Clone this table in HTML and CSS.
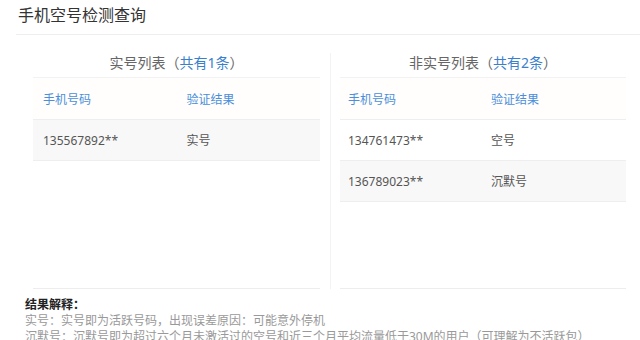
FILE: index.html
```html
<!DOCTYPE html>
<html lang="zh-CN">
<head>
<meta charset="utf-8">
<title>手机空号检测查询</title>
<link rel="stylesheet" href="styles.css">
</head>
<body>
<div class="page">
  <h1 class="title">手机空号检测查询</h1>
  <div class="panels">
    <div class="col">
      <div class="panel">
        <div class="panel-title">实号列表<span class="paren">（</span><span class="count">共有1条</span><span class="paren">）</span></div>
        <table class="list">
          <thead><tr><th>手机号码</th><th>验证结果</th></tr></thead>
          <tbody>
            <tr class="shade"><td>135567892**</td><td>实号</td></tr>
          </tbody>
        </table>
      </div>
    </div>
    <div class="col col-right">
      <div class="panel">
        <div class="panel-title">非实号列表<span class="paren">（</span><span class="count">共有2条</span><span class="paren">）</span></div>
        <table class="list">
          <thead><tr><th>手机号码</th><th>验证结果</th></tr></thead>
          <tbody>
            <tr><td>134761473**</td><td>空号</td></tr>
            <tr class="shade"><td>136789023**</td><td>沉默号</td></tr>
          </tbody>
        </table>
      </div>
    </div>
  </div>
  <div class="notes">
    <div class="notes-title">结果解释：</div>
    <div class="note">实号：实号即为活跃号码，出现误差原因：可能意外停机</div>
    <div class="note">沉默号：沉默号即为超过六个月未激活过的空号和近三个月平均流量低于30M的用户（可理解为不活跃包）</div>
  </div>
</div>
</body>
</html>
```

FILE: styles.css
```css
html, body {
  margin: 0;
  padding: 0;
  background: #fff;
}
body {
  font-family: "Noto Sans", "Noto Sans CJK SC", sans-serif;
  color: #555;
  width: 640px;
  height: 340px;
  overflow: hidden;
}
.page {
  display: flex;
  flex-direction: column;
}
.title {
  margin: 0 0 0 16px;
  padding: 3px 0 7px 2px;
  font-size: 16px;
  line-height: 24px;
  font-weight: normal;
  color: #333;
  border-bottom: 1px solid #eeeeee;
}
.panels {
  display: flex;
  padding: 14px 14px 0 33px;
}
.col {
  width: 287px;
}
.col-right {
  width: 286px;
  margin-left: 10px;
  padding-left: 9px;
  border-left: 1px solid #f3f3f3;
  margin-top: 4px;
}
.col-right .panel {
  margin-top: -4px;
}
.panel {
  height: 239px;
  border-bottom: 1px solid #ededed;
}
.panel-title {
  text-align: center;
  font-size: 14px;
  line-height: 28px;
  color: #666;
  border-bottom: 1px solid #f2f2f2;
}
.paren {
  color: #666;
}
.count {
  color: #3a7fcc;
}
.list {
  width: 100%;
  border-collapse: collapse;
  table-layout: fixed;
  font-size: 12px;
}
.list th, .list td {
  height: 40px;
  padding: 0 0 0 10px;
  text-align: left;
  font-weight: normal;
  border-bottom: 1px solid #eeeeee;
}
.list th {
  height: 41px;
  color: #4a8fdb;
  background: #fffefc;
}
.list td {
  color: #555;
}
.col-right .list th, .col-right .list td {
  padding-left: 8px;
}
.list tr.shade td {
  background: #f8f8f8;
}
.notes {
  padding: 8px 0 0 25px;
  font-size: 12px;
  line-height: 16px;
}
.notes-title {
  font-weight: bold;
  color: #222;
}
.note {
  color: #999;
  white-space: nowrap;
}
```
